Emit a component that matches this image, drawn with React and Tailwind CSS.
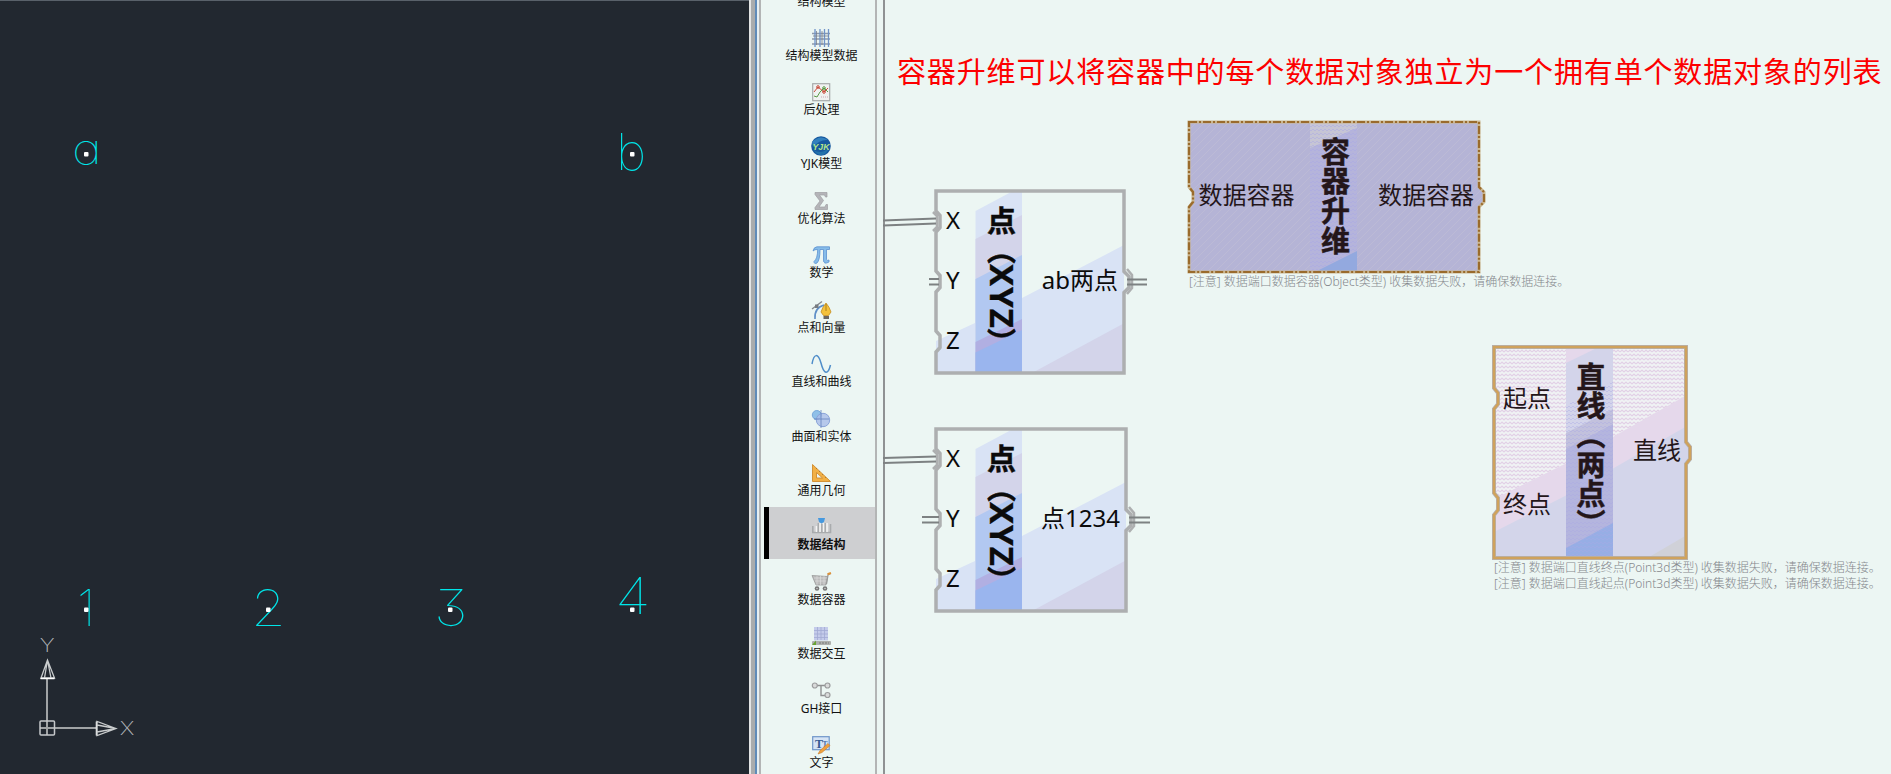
const CJK = "font-['Noto_Sans','Noto_Sans_CJK_SC',sans-serif]";
const CJKB = "font-['Noto_Sans_CJK_SC',sans-serif] [-webkit-text-stroke:0.5px_currentColor]";

const icons = {
  grid: (
    <g fill="none" strokeWidth="1.3">
      <path d="M0 4.500H18M0 10H18M0 15H18" stroke="#8d99ab" />
      <path d="M3 0V18M8 0V18M12.500 0V18M16.500 0V18" stroke="#6f93c9" />
      <path d="M1 7H17M4.500 2V16M10 2V16" stroke="#777f8e" strokeWidth=".8" />
    </g>
  ),
  chart: (
    <g fill="none">
      <rect x=".7" y=".7" width="17" height="17" fill="#f0f2f1" stroke="#a7abab" strokeWidth="1.2" />
      <path d="M2 9L6 4L12 9L16 5" stroke="#c94a3a" strokeWidth="1" />
      <path d="M2 13L5 14L8 9L12 5L16 9" stroke="#5a9a45" strokeWidth="1" />
      <circle cx="6" cy="4" r="1.300" stroke="#c94a3a" />
      <circle cx="12" cy="9" r="1.300" stroke="#c94a3a" />
      <circle cx="12" cy="5" r="1.300" stroke="#5a9a45" />
      <path d="M9 14H16" stroke="#c9a9b5" strokeDasharray="1 1" />
    </g>
  ),
  globe: (
    <g>
      <circle cx="9" cy="9" r="9.800" fill="#17599f" />
      <path d="M0 5Q8 -3 16 3Q8 2 1 10Z" fill="#3280bd" />
      <path d="M1.500 13Q9 18 17 11Q14 19 8 18Q4 17 1.500 13Z" fill="#2472ab" />
      <text x="9" y="12.500" textAnchor="middle" fontSize="9.500" fontStyle="italic" fontWeight="700" fill="#b4e68a" fontFamily="Liberation Sans" textLength="17" lengthAdjust="spacingAndGlyphs">YJK</text>
    </g>
  ),
  sigma: <path d="M3 .5H15V5H13.500L12.500 3H7.500L11.500 8.500L7 15H13L14 12.500H15.500V17.500H3V15.500L8 9L3 2.500Z" fill="#b4b4b8" stroke="#9d9da2" strokeWidth=".7" />,
  pi: <path d="M1 5Q2 .8 5 .8H17.500V3.500H14.500V13.500Q14.700 15 17 14V16Q11.500 19 11.500 14V3.500H8Q8 14 5 17Q2 18.500 2 15.500Q5.500 13 5.700 3.500Q2.500 3.300 1 5Z" fill="#86bce9" stroke="#5b91cf" strokeWidth=".8" />,
  pen: (
    <g>
      <path d="M3 18Q2 7 12 4" fill="none" stroke="#5f8fc7" strokeWidth="1.600" />
      <path d="M0 8L10 .5" stroke="#84878c" strokeWidth="1.300" />
      <rect x="3" y="3.500" width="3.500" height="3.500" fill="#777b80" />
      <path d="M14 2Q10 7 9 11L11.500 14.500H16.500L19 11Q17.500 6 14 2Z" fill="#f4c13a" stroke="#c48c1e" strokeWidth=".8" />
      <path d="M14 3V10" stroke="#9a6e15" strokeWidth=".8" />
      <rect x="11.500" y="15" width="5.500" height="3" fill="#6b6660" />
    </g>
  ),
  wave: <path d="M0 9C2 -2 6 -2 9 8C12 20 16 20 18.500 10" fill="none" stroke="#4f8dc9" strokeWidth="1.500" />,
  solid: (
    <g>
      <circle cx="4.800" cy="5" r="4.500" fill="#8fc0e8" stroke="#78a9da" />
      <circle cx="11" cy="10" r="6.700" fill="#a9bde8" fillOpacity=".8" stroke="#8aa3d8" />
      <path d="M9 0V18M2 9H17" stroke="#6382bc" strokeWidth=".8" fill="none" />
    </g>
  ),
  ruler: (
    <g>
      <path d="M.5 .5V17.500H18.500Z" fill="#f2b045" stroke="#cf8a2a" strokeWidth=".9" />
      <path d="M4.500 8.500V14H10.500Z" fill="#ecf5f2" stroke="#cf8a2a" strokeWidth=".9" />
      <path d="M4 5L5 4M7 8L8 7M10 11L11 10M13 14L14 13" stroke="#a46a1c" strokeWidth=".7" />
    </g>
  ),
  bars: (
    <g>
      <path d="M.8 8V14.500H18.500V6" fill="none" stroke="#a9abad" strokeWidth="1.600" />
      <path d="M4.500 8V14M8 5V14M11.500 5V14M15 5V14" stroke="#f4f4f4" strokeWidth="1.600" />
      <path d="M6.300 5V14M9.800 6V14M13.300 5V14" stroke="#a9abad" strokeWidth="1.500" />
      <path d="M6 0H13L12 4L9.500 5.500L7 4Z" fill="#4699df" />
    </g>
  ),
  cart: (
    <g>
      <path d="M0 2.500L15.500 3.500L14 12H4Z" fill="#bcbcbc" stroke="#999" strokeWidth=".8" />
      <path d="M2 5H15M3 8H14.500M5 3V12M8.500 3V12M12 3V12" stroke="#e0e0e0" strokeWidth=".6" />
      <path d="M14.500 11L16 2L18.500 .5" fill="none" stroke="#999" strokeWidth="1.300" />
      <path d="M15.500 1.300L19 0" stroke="#dd9138" strokeWidth="2" />
      <circle cx="5" cy="15.500" r="2.300" fill="#777" />
      <circle cx="13" cy="15.500" r="2.300" fill="#777" />
      <circle cx="5" cy="15.500" r=".8" fill="#ccc" />
      <circle cx="13" cy="15.500" r=".8" fill="#ccc" />
    </g>
  ),
  table: (
    <g>
      <rect x="2" y="0" width="14" height="13.500" fill="#c4cbea" />
      <path d="M2 3.500H16M2 7H16M2 10.500H16M5.500 0V13M9 0V13M12.500 0V13" stroke="#a2aad3" strokeWidth=".8" />
      <rect x="0" y="14" width="19" height="4" rx="1" fill="#aeb0ae" />
      <path d="M0 18L4 13.500V18Z" fill="#68a331" />
      <path d="M7 16H17" stroke="#767876" strokeDasharray="2 1" />
    </g>
  ),
  nodes: (
    <g fill="#d9dada" stroke="#9c9d9e" strokeWidth="1.200">
      <path d="M5 3.500H13M9 3.500V13.500H14" fill="none" stroke="#8f9091" strokeWidth="1.400" />
      <circle cx="2.800" cy="3.500" r="2.500" />
      <circle cx="15.500" cy="3.500" r="2.500" />
      <circle cx="15.500" cy="13" r="2.500" />
    </g>
  ),
  text: (
    <g>
      <rect x=".7" y=".7" width="16.500" height="13" fill="#d6e4f5" stroke="#6f96c9" strokeWidth="1.200" />
      <text x="7" y="11.500" textAnchor="middle" fontSize="12" fontWeight="700" fill="#355a91" fontFamily="Liberation Serif">T</text>
      <text x="13" y="10.500" textAnchor="middle" fontSize="8" fontWeight="700" fill="#4c72a8" fontFamily="Liberation Serif">T</text>
      <path d="M6 18L8 14.500L16 7.500L18 9.500L10 16.500Z" fill="#f0a13c" stroke="#c8792a" strokeWidth=".6" />
    </g>
  ),
};

const items = [
  ["grid", "结构模型数据"],
  ["chart", "后处理"],
  ["globe", "YJK模型"],
  ["sigma", "优化算法"],
  ["pi", "数学"],
  ["pen", "点和向量"],
  ["wave", "直线和曲线"],
  ["solid", "曲面和实体"],
  ["ruler", "通用几何"],
  ["bars", "数据结构"],
  ["cart", "数据容器"],
  ["table", "数据交互"],
  ["nodes", "GH接口"],
  ["text", "文字"],
];

function Sidebar() {
  return (
    <nav className={`${CJK} mr-[7px] flex h-full w-[116px] shrink-0 flex-col items-stretch border-r-2 border-[#b3b5b5] pl-[3px] text-[12px] leading-[14px] text-[#111]`}>
      <div className="-mt-[5px] mb-[8px] flex h-[14px] shrink-0 justify-center pl-[4px]">结构模型</div>
      {items.map(([icon, label]) => (
        <div key={icon} className="h-[54.450px] shrink-0">
          <div className={`flex h-[52px] flex-col items-center border-l-[5px] pr-px pt-[11.500px] ${icon === "bars" ? "border-black bg-[#cecfd1] font-bold" : "border-transparent"}`}>
            <svg className="h-[19px] w-[19px] shrink-0 overflow-visible" viewBox="0 0 19 19">{icons[icon]}</svg>
            <span className="mt-px whitespace-nowrap">{label}</span>
          </div>
        </div>
      ))}
    </nav>
  );
}

function Glyph({ place, children }) {
  return <span className={`absolute origin-left font-['Inter'] font-thin leading-none text-[#00e5e8] ${place}`}>{children}</span>;
}

function Cad() {
  const dots = [[86, 154], [632, 154], [86, 609.5], [268, 609.5], [450, 609.5], [632, 609.5]];
  return (
    <section className="relative h-full w-[749px] shrink-0 overflow-hidden border-t border-[#59616a] bg-[#222830]">
      <Glyph place="left-[72px] top-[127px] scale-x-[1.22] text-[42px] [font-feature-settings:'cv11']">a</Glyph>
      <Glyph place="left-[616px] top-[125px] scale-x-[1.02] text-[51px]">b</Glyph>
      <Glyph place="left-[77px] top-[582px] text-[50px]">1</Glyph>
      <Glyph place="left-[251px] top-[582px] scale-x-[1.12] text-[50px]">2</Glyph>
      <Glyph place="left-[434px] top-[582px] scale-x-[1.15] text-[50px] [font-feature-settings:'cv09']">3</Glyph>
      <Glyph place="left-[615px] top-[570px] scale-x-[1.2] text-[50px]">4</Glyph>
      <span className="absolute left-[41px] top-[635px] scale-x-[1.2] font-['Inter'] text-[19px] font-extralight leading-none text-[#b0b3b6]">Y</span>
      <span className="absolute left-[121px] top-[718px] scale-x-[1.2] font-['Inter'] text-[19px] font-extralight leading-none text-[#b0b3b6]">X</span>
      <svg className="absolute inset-0 h-full w-full" viewBox="0 1 749 773">
        {dots.map(([x, y]) => <rect key={`${x}-${y}`} x={x - 2} y={y - 2} width="4.500" height="4.500" rx="1" fill="#fff" />)}
        <g fill="none" stroke="#a0a3a5" strokeWidth="1.500">
          <path d="M47 679V735M40 728H97" strokeWidth="2" />
          <rect x="40" y="721" width="14.500" height="14" rx="1" stroke="#c5c8ca" />
          <path d="M47.500 660L41 678H54.500ZM47.500 660L44.500 678M47.500 660L51 678" strokeWidth="1.300" stroke="#c9cccd" />
          <path d="M40.500 678.500H54.500M96.500 721.500V735.500" stroke="#fff" />
          <path d="M116 728.500L97 721.500V735.500ZM116 728.500L97 725M116 728.500L97 732" strokeWidth="1.300" stroke="#c9cccd" />
        </g>
      </svg>
    </section>
  );
}

function PointNode({ w, place, out, wires, id }) {
  const r = w - 2;
  return (
    <div className={`absolute h-[186px] ${place}`}>
      <svg className="absolute inset-0 h-full w-full overflow-visible">
        <clipPath id={id}><rect x="2" y="2" width={w - 4} height="182" /></clipPath>
        <g clipPath={`url(#${id})`}>
          <path d="M2 152L41 134V184H2ZM88 109L196 53V184H88Z" fill="#d9e3f5" />
          <path d="M98 184L196 131V184Z" fill="#d3d4ea" />
          <path d="M41.500 22L79 2H88V184H41.500Z" fill="#d9e3f5" />
          <path d="M41.500 50L88 26V184H41.500Z" fill="#d3d4ea" />
          <path d="M41.500 90L88 66V184H41.500Z" fill="#b2c8f1" />
          <path d="M41.500 153L88 130V184H41.500Z" fill="#b1afe2" />
          <path d="M41.500 163.500L88 141V184H41.500Z" fill="#9ab5ee" />
        </g>
        <path
          d={`M2 2H${r}V82.500L${r + 5} 87.500V98.500L${r} 103.500V184H2V163L6 158.500V146.500L2 142V103L6 98.500V86.500L2 82V43L6 38.500V26.500L2 22Z`}
          fill="none" stroke="#adafb0" strokeWidth="3.500"
        />
        <path d={`M-1 23L3 27V38L-1 42M${r + 3} 80L${r + 8} 86V99L${r + 3} 105`} fill="none" stroke="#adafb0" strokeWidth="2.500" />
        <path d={wires} fill="none" stroke="#7d8182" strokeWidth="1.800" />
      </svg>
      <div className={`${CJK} relative flex h-full text-[24px] leading-none text-[#0b0b0b]`}>
        <div className="flex w-[41px] flex-col gap-[36px] pl-[12px] pt-[19px]">
          <span>X</span><span>Y</span><span>Z</span>
        </div>
        <div className={`${CJKB} flex h-full w-[47px] items-center pl-[6px] pt-[16.500px] text-[29px] font-bold leading-[29px] [writing-mode:vertical-rl]`}>
          <span className="h-full whitespace-nowrap">点（<span className="font-['Noto_Sans'] text-[33px] leading-[29px] tracking-[1px] [-webkit-text-stroke:0.3px_currentColor]">XYZ</span>）</span>
        </div>
        <div className="flex-1 whitespace-nowrap pr-[8px] pt-[79px] text-right">{out}</div>
      </div>
    </div>
  );
}

function Hatches() {
  return (
    <defs>
      <pattern id="zigPink" width="8" height="4" patternUnits="userSpaceOnUse">
        <path d="M0 3L2 1L4 3L6 1L8 3" fill="none" stroke="#e2d0e6" strokeWidth="1.200" />
      </pattern>
      <pattern id="zigBlue" width="8" height="4" patternUnits="userSpaceOnUse">
        <path d="M0 3L2 1L4 3L6 1L8 3" fill="none" stroke="#a9a8e4" strokeWidth="1" />
      </pattern>
      <pattern id="grain" width="8" height="8" patternUnits="userSpaceOnUse">
        <path d="M0 4L4 0M4 8L8 4" fill="none" stroke="#bebdd6" strokeWidth=".7" />
      </pattern>
    </defs>
  );
}

function UpliftNode() {
  const shape = "M2 2H292V67L297 72V82L292 87V152H2V87L6 82V72L2 67Z";
  return (
    <div className="absolute left-[304px] top-[120px] h-[153px] w-[294px]">
      <svg className="absolute inset-0 h-full w-full overflow-visible">
        <Hatches />
        <path d={shape} fill="#b5b4d6" />
        <path d={shape} fill="url(#grain)" />
        <rect x="123" y="3" width="47" height="148" fill="#b5b4db" />
        <path d="M123 3H170V8L123 28Z" fill="#c6c5d5" />
        <rect x="123" y="3" width="47" height="148" fill="url(#zigBlue)" opacity=".5" />
        <path d="M130 151L170 131V151Z" fill="#93a9df" />
        <path d={shape} fill="none" stroke="#c9b58f" strokeWidth="3" />
        <path d={shape} fill="none" stroke="#9a6b2c" strokeWidth="2.200" strokeDasharray="8 2 2 2" />
      </svg>
      <div className={`${CJK} relative flex h-full text-[24px] leading-none text-[#24161a]`}>
        <span className="w-[123px] whitespace-nowrap pl-[11.500px] pt-[62.500px]">数据容器</span>
        <span className={`${CJKB} flex w-[47px] items-center pl-[3px] pt-[16.500px] text-[29px] font-bold leading-[29px] tracking-[0.8px] [writing-mode:vertical-rl]`}><span className="h-full whitespace-nowrap">容器升维</span></span>
        <span className="flex-1 whitespace-nowrap pr-[7px] pt-[62.500px] text-right">数据容器</span>
      </div>
    </div>
  );
}

function LineNode() {
  const shape = "M2 2H194V97L198 102V114L194 119V213H2V170L6 165V153L2 148V64L6 59V48L2 43Z";
  return (
    <div className="absolute left-[609px] top-[345px] h-[215px] w-[195px]">
      <svg className="absolute inset-0 h-full w-full overflow-visible">
        <clipPath id="lineClip"><path d={shape} /></clipPath>
        <g clipPath="url(#lineClip)">
          <rect width="198" height="215" fill="#f0f3f4" />
          <rect width="198" height="215" fill="url(#zigPink)" />
          <path d="M0 155L75 118L200 47V215H0Z" fill="#e5d8eb" />
          <path d="M0 188L75 150L200 78V215H0Z" fill="#d3d5ea" />
          <path d="M152 215L200 187V215Z" fill="#d0d1d8" />
          <g transform="translate(-1 0)">
            <rect x="75" y="2" width="47" height="211" fill="#d3d4ea" />
            <path d="M75 2H108L75 18Z" fill="#e5d8eb" />
            <path d="M75 88L122 64V213H75Z" fill="#c2c1dd" />
            <path d="M75 104L122 79V213H75Z" fill="#b4b5de" />
            <path d="M75 203L122 178V213H75Z" fill="#97aee5" />
            <path d="M75 60L122 36V213H75Z" fill="url(#zigBlue)" opacity=".4" />
          </g>
        </g>
        <path d={shape} fill="none" stroke="#b4b2b5" strokeWidth="4" />
        <path d={shape} fill="none" stroke="#cfa25c" strokeWidth="2.600" />
      </svg>
      <div className={`${CJK} relative flex h-full text-[24px] leading-none text-[#24161a]`}>
        <div className="flex w-[75px] flex-col gap-[82px] pl-[11px] pt-[41px]">
          <span>起点</span><span>终点</span>
        </div>
        <div className={`${CJKB} flex w-[47px] items-center pt-[17px] text-[29px] font-bold leading-[29px] tracking-[0.4px] [writing-mode:vertical-rl]`}>
          <span className="h-full whitespace-nowrap">直线（两点）</span>
        </div>
        <div className="flex-1 pr-[6px] pt-[93px] text-right">直线</div>
      </div>
    </div>
  );
}

function Note({ place, children }) {
  return <p className={`${CJK} absolute whitespace-nowrap text-[12px] font-light leading-[16px] text-[#85888d] ${place}`}>{children}</p>;
}

export default function App() {
  return (
    <main className="flex h-[774px] w-[1891px] overflow-hidden bg-[#ecf6f3]">
      <Cad />
      <div className="flex h-full w-[12px] shrink-0">
        <div className="w-[2px] bg-[#e3e5e5]" />
        <div className="w-[4px] bg-[#a9acad]" />
        <div className="w-[2px] bg-[#5f8bb8]" />
        <div className="w-[2px] bg-[#e6eff2]" />
        <div className="w-[2px] bg-[#b3b5b5]" />
      </div>
      <Sidebar />
      <section className="relative ml-[-1px] h-full flex-1">
        <div className="absolute left-0 top-0 h-full w-[2px] bg-[#8f9293]" />
        <h1 className={`${CJK} absolute left-[14px] top-[50px] whitespace-nowrap text-[29px] leading-[43px] tracking-[0.86px] text-[#fd0000]`}>容器升维可以将容器中的每个数据对象独立为一个拥有单个数据对象的列表</h1>
        <PointNode id="p1" w={192} place="left-[51px] top-[189px] w-[192px]" out="ab两点" wires="M-51 31.500L2 29.500M-51 36.500L2 34.500M-5 90H5M-5 95.500H5M193 90.500H213M193 95.500H213" />
        <PointNode id="p2" w={194} place="left-[51px] top-[427px] w-[194px]" out="点1234" wires="M-51 31L2 29.500M-51 36L2 34.500M-12 90H5M-12 95.500H5M195 90.500H216M195 95.500H216" />
        <UpliftNode />
        <LineNode />
        <Note place="left-[306px] top-[274px]">[注意] 数据端口数据容器(Object类型) 收集数据失败，请确保数据连接。</Note>
        <Note place="left-[611px] top-[560px]">[注意] 数据端口直线终点(Point3d类型) 收集数据失败，请确保数据连接。<br />[注意] 数据端口直线起点(Point3d类型) 收集数据失败，请确保数据连接。</Note>
      </section>
    </main>
  );
}
